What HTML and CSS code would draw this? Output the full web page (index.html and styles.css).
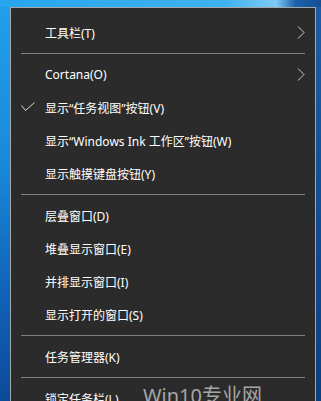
FILE: index.html
```html
<!DOCTYPE html>
<html lang="zh-CN">
<head>
  <meta charset="UTF-8">
  <meta name="viewport" content="width=device-width, initial-scale=1.0">
  <title>任务栏菜单</title>
  <link rel="stylesheet" href="styles.css">
</head>
<body>
  <div class="menu">
    <div class="item">
      <span class="mark"></span>
      <span class="label">工具栏(T)</span>
      <svg class="arrow" width="8" height="13" viewBox="0 0 8 13"><path d="M1 0.5 L7 6.5 L1 12.5" fill="none" stroke="#cfcfcf" stroke-width="1"/></svg>
    </div>
    <div class="sep"></div>
    <div class="item">
      <span class="mark"></span>
      <span class="label">Cortana(O)</span>
      <svg class="arrow" width="8" height="13" viewBox="0 0 8 13"><path d="M1 0.5 L7 6.5 L1 12.5" fill="none" stroke="#cfcfcf" stroke-width="1"/></svg>
    </div>
    <div class="item">
      <span class="mark">
        <svg width="14" height="10" viewBox="0 0 14 10"><path d="M0.5 3.5 L4.5 8.5 L13.5 0.5" fill="none" stroke="#dcdcdc" stroke-width="1"/></svg>
      </span>
      <span class="label">显示“任务视图”按钮(V)</span>
    </div>
    <div class="item">
      <span class="mark"></span>
      <span class="label">显示“Windows Ink 工作区”按钮(W)</span>
    </div>
    <div class="item">
      <span class="mark"></span>
      <span class="label">显示触摸键盘按钮(Y)</span>
    </div>
    <div class="sep"></div>
    <div class="item">
      <span class="mark"></span>
      <span class="label">层叠窗口(D)</span>
    </div>
    <div class="item">
      <span class="mark"></span>
      <span class="label">堆叠显示窗口(E)</span>
    </div>
    <div class="item">
      <span class="mark"></span>
      <span class="label">并排显示窗口(I)</span>
    </div>
    <div class="item">
      <span class="mark"></span>
      <span class="label">显示打开的窗口(S)</span>
    </div>
    <div class="sep"></div>
    <div class="item">
      <span class="mark"></span>
      <span class="label">任务管理器(K)</span>
    </div>
    <div class="sep"></div>
    <div class="item">
      <span class="mark"></span>
      <span class="label">锁定任务栏(L)</span>
    </div>
  </div>
  <div class="watermark">Win10专业网</div>
</body>
</html>
```
FILE: styles.css
```css
html, body {
  height: 100%;
}
body {
  margin: 0;
  padding: 7px 5px 0 10px;
  box-sizing: border-box;
  overflow: hidden;
  font-family: "Noto Sans", "Noto Sans CJK SC", sans-serif;
  background:
    linear-gradient(90deg, #27a5ee 0%, #3fb2f0 70%, #7ccbf5 86%, #1d62ab 92%, #144f93 100%) top left / 100% 7px no-repeat,
    linear-gradient(180deg, #1d5da6 0%, #0d3f7e 100%) top right / 5px 100% no-repeat,
    linear-gradient(180deg, #22a0ea 0%, #1a8ad9 40%, #1166bb 70%, #0c4a99 100%);
}
.menu {
  background: #2b2b2b;
  border: 1px solid #a3a8ad;
  border-bottom: none;
  padding: 8px 0 0;
  height: 100%;
  box-sizing: border-box;
  overflow: hidden;
  color: #ffffff;
  font-size: 12px;
}
.item {
  display: flex;
  align-items: center;
  height: 33px;
  padding: 0 10px;
}
.mark {
  width: 24px;
  display: flex;
  align-items: center;
}
.mark svg {
  display: block;
  margin-top: -1px;
}
.label {
  white-space: nowrap;
}
.arrow {
  margin-left: auto;
  display: block;
}
.sep {
  height: 1px;
  background: #808080;
  margin: 4px 10px;
}
.watermark {
  position: absolute;
  left: 143px;
  top: 384px;
  font-size: 20px;
  line-height: 24px;
  color: #a6a6a6;
  white-space: nowrap;
}
```
